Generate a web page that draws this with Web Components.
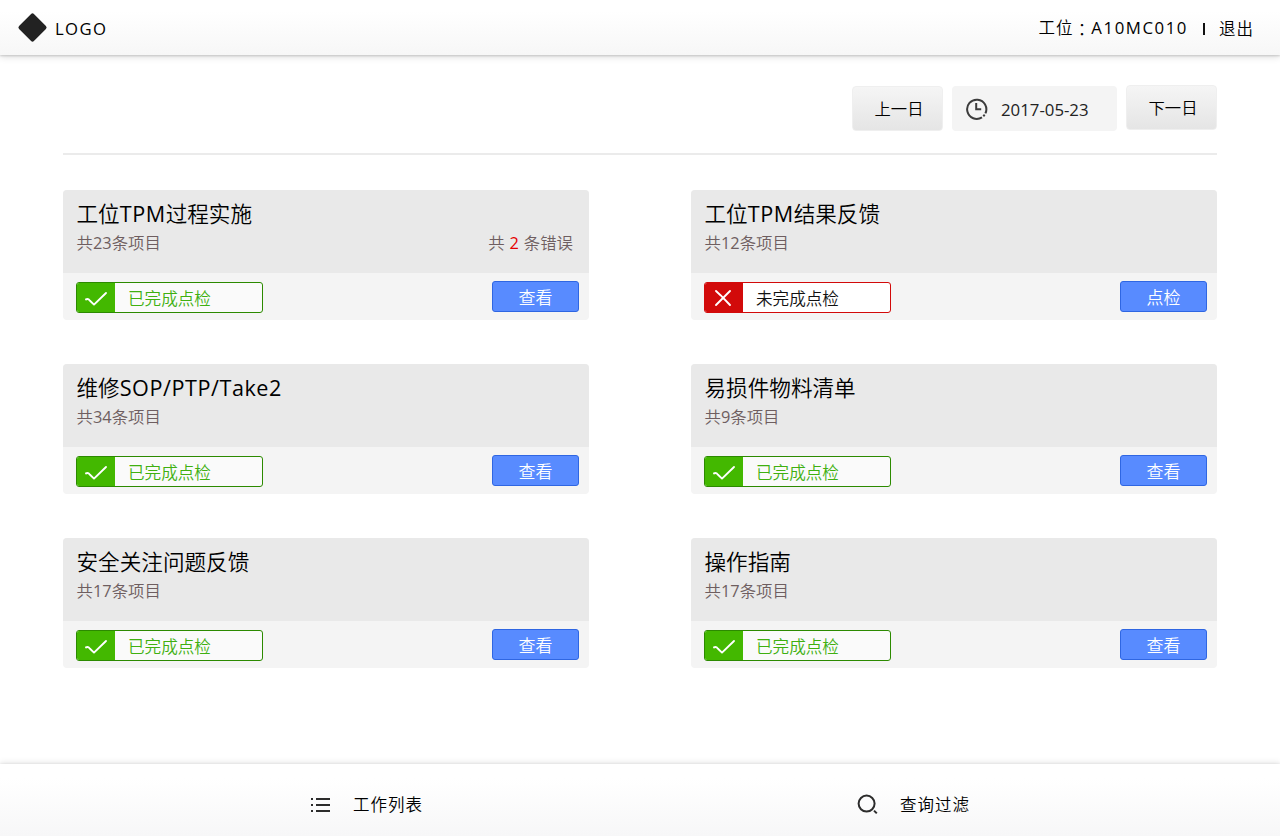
<!DOCTYPE html>
<html lang="zh-CN">
<head>
<meta charset="utf-8">
<title>TPM</title>
<style>
html,body{margin:0;height:100%;overflow:hidden}
body{background:#fff;color:#000;font-family:"Open Sans","Noto Sans CJK SC",sans-serif;font-size:16.6px}
</style>
</head>
<body>
<tpm-app></tpm-app>
<script>
const define = (name, html, setup) => customElements.define(name, class extends HTMLElement {
  connectedCallback() {
    if (this.shadowRoot) return;
    const t = document.createElement('template');
    t.innerHTML = html;
    this.attachShadow({mode: 'open'}).append(t.content.cloneNode(true));
    if (setup) setup(this, this.shadowRoot);
  }
});

// Latin runs are set in a slightly heavier weight than the Chinese text around them.
const mixed = (node, text) => {
  for (const part of text.split(/([A-Za-z0-9\/]+)/).filter(Boolean)) {
    if (/^[A-Za-z0-9\/]/.test(part)) {
      const s = document.createElement('span');
      s.className = 'latin';
      s.textContent = part;
      node.append(s);
    } else node.append(part);
  }
};

define('top-bar', `<style>
:host{display:flex;box-sizing:border-box;height:55px;flex:none;padding:0 26px 0 17px;align-items:flex-start;background:linear-gradient(#fff 20%,#f7f7f7);box-shadow:0 1px 2px rgba(0,0,0,.16),0 2px 7px rgba(0,0,0,.13);line-height:24px;white-space:pre}
svg{margin:12px 7px 0 0;flex:none}
.logo{margin-top:17px;font-size:16.7px;letter-spacing:1.4px;font-weight:400}
.user{margin:16px 0 0 auto;display:flex;align-items:flex-start;font-size:16.5px;letter-spacing:1.15px}
.colon{font-family:"Noto Sans CJK TC",sans-serif;vertical-align:-2px;line-height:0}
.id{font-weight:400;font-size:16.8px;letter-spacing:1.55px}
.bar{width:2px;height:12px;background:#111;margin:7px 14px 0 15px}
.out{letter-spacing:1px;padding-top:1px}
</style>
<svg width="31" height="31" viewBox="0 0 31 31"><rect x="5" y="5" width="21" height="21" rx="2" fill="#222" transform="rotate(45 15.5 15.5)"/></svg>
<span class="logo">LOGO</span>
<div class="user"><span>工位<span class="colon" lang="zh-TW">：</span><span class="id"><slot></slot></span></span><i class="bar"></i><span class="out">退出</span></div>`);

define('day-button', `<style>
:host{display:block;box-sizing:border-box;width:91px;height:45px;border-radius:4px;background:linear-gradient(#f5f5f5,#e5e5e5);border:1px solid #efefef;text-align:center;line-height:44px;padding-left:3px;font-size:16.3px}
</style><slot></slot>`);

define('date-field', `<style>
:host{display:flex;align-items:center;box-sizing:border-box;width:165px;height:45px;border-radius:4px;background:#f4f4f4;padding-left:13px;color:#222;font-size:16.8px;font-weight:400}
svg{margin-right:12px}span{padding-top:1px}
</style>
<svg width="24" height="24" viewBox="0 0 24 24" fill="none" stroke="#3c3c3c" stroke-width="2"><path d="M17 20.3A9.6 9.6 0 1 1 20.4 16.4"/><path d="M11.2 6v6.2h5"/><path d="M18.3 17.8L19.7 19.2"/></svg>
<span><slot></slot></span>`);

define('date-nav', `<style>
:host{display:flex;justify-content:flex-end;align-items:flex-start;box-sizing:border-box;height:100px;margin:0 63px;padding-top:31px;gap:9px;border-bottom:2px solid #ebebeb}
.next{margin-top:-1px}
</style><day-button>上一日</day-button><date-field>2017-05-23</date-field><day-button class="next">下一日</day-button>`);

define('status-tag', `<style>
:host{display:flex;box-sizing:border-box;width:187px;height:31px;border:1px solid #2c8a00;border-radius:3px;background:#fafafa;color:#3fb010;overflow:hidden;line-height:31px}
:host([failed]){border-color:#d20a0a;background:#fff;color:#111}
.icon{width:38px;height:29px;background:#43b800;flex:none}
:host([failed]) .icon{background:#d20a0a}
svg{display:block}
span{margin-left:13px}
</style>
<div class="icon"><svg width="38" height="29" viewBox="0 0 38 29" fill="none" stroke="#fff" stroke-width="1.9" stroke-linecap="round" stroke-linejoin="round"><path/></svg></div>
<span><slot></slot></span>`, (el, root) => {
  root.querySelector('path').setAttribute('d', el.hasAttribute('failed')
    ? 'M11 8L15.5 12.2L25 22M25 8L11 22'
    : 'M9 16.4Q11 15 13 17.8L17 21.6L29 10');
});

define('action-button', `<style>
:host{display:block;box-sizing:border-box;width:87px;height:31px;border:1px solid #2f66e2;border-radius:3px;background:#588bff;color:#fff;text-align:center;line-height:31px;font-size:17px}
</style><slot></slot>`);

define('task-card', `<style>
:host{display:flex;flex-direction:column;height:130px;border-radius:4px;overflow:hidden;background:#f4f4f4}
.head{box-sizing:border-box;height:83px;background:#e9e9e9;padding:9px 16px 0 13.5px}
h2{margin:0;font-weight:inherit;font-size:21.6px;line-height:30px;white-space:nowrap}
.latin{font-weight:400}
h2 .latin{letter-spacing:.55px}
.meta{display:flex;justify-content:space-between;line-height:26px;margin-top:1px;font-size:16.4px;color:#6e5e60;white-space:pre}
.errors{word-spacing:.6px}
b{font-weight:400;color:#e60000}
.foot{display:flex;justify-content:space-between;padding:8px 10px 0 13px}
status-tag{margin-top:1px}
</style>
<div class="head"><h2></h2><div class="meta"><span class="count"></span></div></div>
<div class="foot"></div>`, (el, root) => {
  const failed = el.hasAttribute('failed');
  mixed(root.querySelector('h2'), el.getAttribute('heading'));
  mixed(root.querySelector('.count'), '共' + el.getAttribute('count') + '条项目');
  const errors = el.getAttribute('errors');
  if (errors) {
    const s = document.createElement('span');
    s.className = 'errors';
    const n = document.createElement('b');
    n.textContent = errors;
    s.append('共 ', n, ' 条错误');
    root.querySelector('.meta').append(s);
  }
  const tag = document.createElement('status-tag');
  tag.toggleAttribute('failed', failed);
  tag.textContent = failed ? '未完成点检' : '已完成点检';
  const button = document.createElement('action-button');
  button.textContent = failed ? '点检' : '查看';
  root.querySelector('.foot').append(tag, button);
});

define('task-grid', `<style>
:host{display:grid;grid-template-columns:526px 526px;justify-content:space-between;row-gap:44px;margin:35px 63px 0}
</style>
<task-card heading="工位TPM过程实施" count="23" errors="2"></task-card>
<task-card heading="工位TPM结果反馈" count="12" failed></task-card>
<task-card heading="维修SOP/PTP/Take2" count="34"></task-card>
<task-card heading="易损件物料清单" count="9"></task-card>
<task-card heading="安全关注问题反馈" count="17"></task-card>
<task-card heading="操作指南" count="17"></task-card>`);

define('bottom-bar', `<style>
:host{display:grid;grid-template-columns:547px 1fr;box-sizing:border-box;height:72px;margin-top:auto;flex:none;padding:28px 0 0 310px;background:linear-gradient(#fff 20%,#f7f7f8);box-shadow:0 -1px 2px rgba(0,0,0,.06),0 -2px 6px rgba(0,0,0,.08);font-size:16.5px;letter-spacing:1px;line-height:26px}
div{display:flex}
svg{width:22px;height:24px;margin-right:21px}
</style>
<div><svg viewBox="0 0 22 24" fill="none" stroke="#2c2c2c" stroke-width="2"><path d="M1 7h2M6 7h14M1 13h2M6 13h14M1 19h2M6 19h14"/></svg>工作列表</div>
<div><svg viewBox="0 0 22 24" fill="none" stroke="#2c2c2c" stroke-width="2"><circle cx="9.6" cy="11.6" r="8"/><path d="M17 18.6l2.8 2.8"/></svg>查询过滤</div>`);

define('tpm-app', `<style>
:host{display:flex;flex-direction:column;width:1280px;height:836px;background:#fff;font-weight:350}
</style>
<top-bar>A10MC010</top-bar><date-nav></date-nav><task-grid></task-grid><bottom-bar></bottom-bar>`);
</script>
</body>
</html>
